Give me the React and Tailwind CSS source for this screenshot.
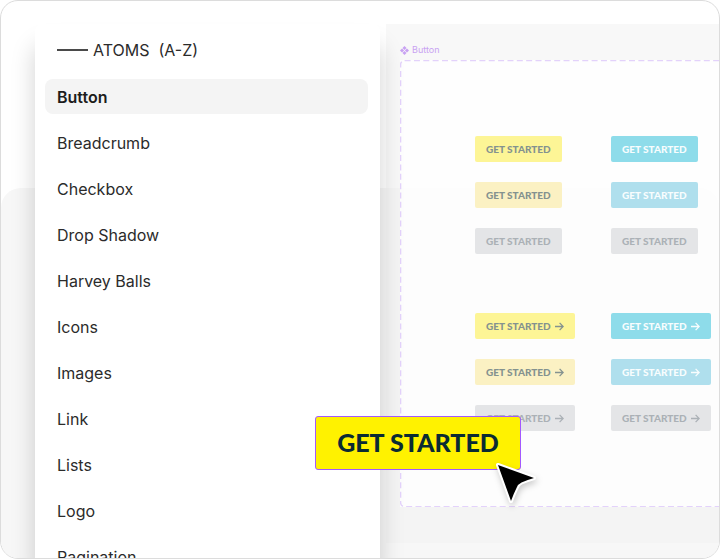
import clsx from "clsx";

const atoms = [
  "Button",
  "Breadcrumb",
  "Checkbox",
  "Drop Shadow",
  "Harvey Balls",
  "Icons",
  "Images",
  "Link",
  "Lists",
  "Logo",
  "Pagination",
];

const variants = [
  { id: "yellow", className: "bg-[#fdf596] text-[#84928f]" },
  { id: "cyan", className: "bg-[#8edcea] text-[#f8fdfe]" },
  { id: "yellow-hover", className: "bg-[#fbf1c3] text-[#84928f]" },
  { id: "cyan-hover", className: "bg-[#afdfed] text-[#f8fdfe]" },
  { id: "yellow-disabled", className: "bg-[#e4e5e7] text-[#abb1b6]", disabled: true },
  { id: "cyan-disabled", className: "bg-[#e4e5e7] text-[#abb1b6]", disabled: true },
];

function ArrowIcon() {
  return (
    <svg className="h-[9px] w-[9px]" viewBox="0 0 9 9" fill="none" stroke="currentColor" strokeWidth="1.3" aria-hidden="true">
      <path d="M0 4.5H8M4.6 0.9L8.2 4.5L4.6 8.1" />
    </svg>
  );
}

function ComponentIcon() {
  return (
    <svg className="h-[9px] w-[9px]" viewBox="0 0 8 8" fill="currentColor" aria-hidden="true">
      <path d="M4 0L5.8 1.8L4 3.6L2.2 1.8ZM4 4.4L5.8 6.2L4 8L2.2 6.2ZM0 4L1.8 2.2L3.6 4L1.8 5.8ZM4.4 4L6.2 2.2L8 4L6.2 5.8Z" />
    </svg>
  );
}

function VariantGrid({ arrow }) {
  return (
    <div className="grid grid-cols-[repeat(2,136px)] gap-y-5">
      {variants.map((v) => (
        <button
          key={v.id}
          type="button"
          disabled={v.disabled}
          className={clsx(
            "flex h-[26px] items-center gap-1 justify-self-start rounded-xs px-[11px] text-[10px] font-black whitespace-nowrap",
            v.className
          )}
        >
          GET STARTED
          {arrow && <ArrowIcon />}
        </button>
      ))}
    </div>
  );
}

function Sidebar() {
  return (
    <nav className="z-10 w-[345px] shrink-0 rounded-t-lg bg-white pt-[9px] pr-3 pl-[10px] text-[#2b2b2b] shadow-[0_22px_24px_rgba(0,0,0,0.18)]">
      <h2 className="flex h-[34px] items-center gap-[5px] pl-3 text-base whitespace-pre">
        <span className="w-[31px] border-t-2 border-[#4a4a4a]" />
        ATOMS  (A-Z)
      </h2>
      <ul className="mt-3 flex flex-col gap-[11px]">
        {atoms.map((name, i) => (
          <li key={name}>
            <a
              href={`#${name.toLowerCase().replace(" ", "-")}`}
              className={clsx(
                "flex h-[35px] items-center rounded-lg px-3 text-base",
                i === 0 && "bg-[#f4f4f4] font-semibold text-[#1c1c1c]"
              )}
            >
              {name}
            </a>
          </li>
        ))}
      </ul>
    </nav>
  );
}

function Canvas() {
  return (
    <section className="mb-[15px] ml-[6px] flex min-w-0 flex-1 flex-col bg-[#f1f1f1]/50 pt-[22px] pb-9 pl-[14px] font-['Lato',sans-serif]">
      <div className="flex h-2 items-center gap-[3px] font-['Inter',sans-serif] text-[9px] text-[#c8a2f2]">
        <ComponentIcon />
        <span>Button</span>
      </div>
      <div className="relative mt-[6px] flex-1 bg-white/80 pt-[76px] pl-[75px]">
        <svg className="absolute inset-0 h-full w-full" aria-hidden="true">
          <rect
            x="0.6"
            y="0.6"
            width="150%"
            height="99.8%"
            rx="4"
            fill="none"
            stroke="#e3d2fb"
            strokeWidth="1.4"
            strokeDasharray="6 3.35"
          />
        </svg>
        <div className="relative flex flex-col gap-[59px]">
          <VariantGrid />
          <VariantGrid arrow />
        </div>
      </div>
    </section>
  );
}

export default function App() {
  return (
    <main className="relative grid h-screen grid-cols-1 grid-rows-1 overflow-hidden rounded-[18px] border border-[#dcdcdc] bg-white font-['Inter',sans-serif]">
      <div className="col-start-1 row-start-1 mt-[187px] rounded-t-[20px] bg-[#f7f7f7]" />
      <div className="col-start-1 row-start-1 flex min-h-0 pt-[23px] pl-[34px]">
        <Sidebar />
        <Canvas />
      </div>

      {/* instance being dragged out of the canvas */}
      <div className="absolute top-[415px] left-[314px] z-20">
        <button
          type="button"
          className="flex h-[54px] w-[206px] items-center justify-center rounded-[3px] border border-[#a259ff] bg-[#fff200] font-['Lato',sans-serif] text-[25px] font-black whitespace-nowrap text-[#0a2b33]"
        >
          GET STARTED
        </button>
        <svg
          className="absolute top-[44px] left-[178px] h-[46px] w-[46px] drop-shadow-[1px_3px_3px_rgba(0,0,0,0.2)]"
          viewBox="0 0 46 46"
          aria-hidden="true"
        >
          <path
            d="M5 5L41 18Q34 20 28.500 22.500Q25 24 23.500 28Q20.500 34 18 41Z"
            fill="#000"
            stroke="#fff"
            strokeWidth="4"
            strokeLinejoin="round"
            paintOrder="stroke"
          />
        </svg>
      </div>
    </main>
  );
}
